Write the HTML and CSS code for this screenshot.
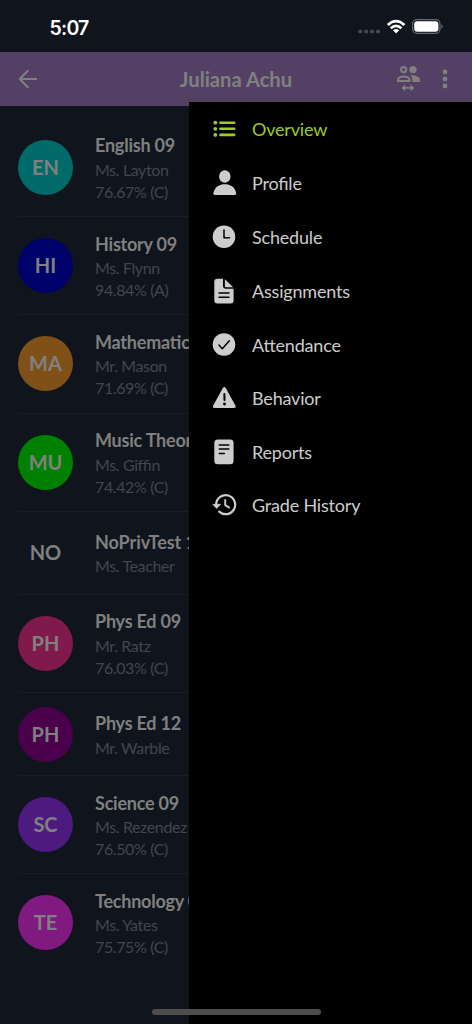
FILE: index.html
```html
<!DOCTYPE html>
<html lang="en">
<head>
<meta charset="utf-8">
<title>Juliana Achu</title>
<link rel="stylesheet" href="styles.css">
</head>
<body>
<div class="phone">
  <div class="status">
    <span class="time">5:07</span>
    <svg class="status-icons" width="86" height="20" viewBox="0 0 86 20">
      <g fill="#45484f"><circle cx="3.3" cy="14.500" r="2.1"/><circle cx="9.2" cy="14.500" r="2.1"/><circle cx="15.1" cy="14.500" r="2.1"/><circle cx="21" cy="14.500" r="2.1"/></g>
      <g fill="none" stroke="#fff" stroke-width="2.7"><path d="M30.8 8Q39 .2 47.4 8"/><path d="M33.8 11.2Q39.1 6.4 44.4 11.2"/></g>
      <path fill="#fff" d="M36 13.200Q39.1 10.600 42.2 13.200L39.1 16.400Z"/>
      <rect x="55.6" y="2.6" width="27.4" height="13.8" rx="4.3" fill="none" stroke="#64676c" stroke-width="1.2"/>
      <rect x="57.2" y="4.200" width="24.2" height="10.6" rx="3" fill="#fff"/>
      <path d="M84.3 7.300q3 2.2 0 4.6z" fill="#64676c"/>
    </svg>
  </div>
  <header class="bar">
    <svg class="back" width="20" height="20" viewBox="0 0 20 20" fill="none" stroke="#808080" stroke-width="2" stroke-linecap="round" stroke-linejoin="round"><path d="M18.2 10H2M9.8 1.8L1.7 10l8.1 8.2"/></svg>
    <h1 class="name">Juliana Achu</h1>
    <svg class="people" width="24" height="27" viewBox="0 0 24 27" fill="#808080">
      <circle cx="7.7" cy="4.6" r="2.6" fill="none" stroke="#808080" stroke-width="2"/>
      <circle cx="17" cy="4.6" r="3.6"/>
      <path d="M2 16.1v-1.2C2 12.8 5.1 11.4 7.8 11.4s5.8 1.4 5.8 3.5v1.2z" fill="none" stroke="#808080" stroke-width="2"/>
      <path d="M15.4 10.2c4.7 0 8.6 1.7 8.6 4.8v2.1h-7.6v-2.3c0-1.9-.9-3.5-2.4-4.5z"/>
      <path d="M5.3 22.9l4-3.4v2.5h5.2v-2.5l4 3.4-4 3.4v-2.5H9.3v2.5z"/>
    </svg>
    <svg class="dots" width="6" height="20" viewBox="0 0 6 20" fill="#808080"><circle cx="3" cy="3" r="2.4"/><circle cx="3" cy="10" r="2.4"/><circle cx="3" cy="17" r="2.4"/></svg>
  </header>
  <ul class="courses">
    <li class="course"><span class="avatar teal">EN</span><div class="info"><b>English 09</b><p>Ms. Layton</p><p>76.67% (C)</p></div></li>
    <li class="course"><span class="avatar navy">HI</span><div class="info"><b>History 09</b><p>Ms. Flynn</p><p>94.84% (A)</p></div></li>
    <li class="course"><span class="avatar orange">MA</span><div class="info"><b>Mathematics 09</b><p>Mr. Mason</p><p>71.69% (C)</p></div></li>
    <li class="course"><span class="avatar green">MU</span><div class="info"><b>Music Theory 09</b><p>Ms. Giffin</p><p>74.42% (C)</p></div></li>
    <li class="course short"><span class="avatar">NO</span><div class="info"><b class="roomy">NoPrivTest 12</b><p>Ms. Teacher</p></div></li>
    <li class="course"><span class="avatar pink">PH</span><div class="info"><b>Phys Ed 09</b><p>Mr. Ratz</p><p>76.03% (C)</p></div></li>
    <li class="course short"><span class="avatar plum">PH</span><div class="info"><b>Phys Ed 12</b><p>Mr. Warble</p></div></li>
    <li class="course"><span class="avatar violet">SC</span><div class="info"><b>Science 09</b><p>Ms. Rezendez</p><p>76.50% (C)</p></div></li>
    <li class="course"><span class="avatar magenta">TE</span><div class="info"><b>Technology 09</b><p>Ms. Yates</p><p>75.75% (C)</p></div></li>
  </ul>
  <nav class="drawer">
    <a class="item active"><svg class="icon" viewBox="0 0 26 26"><g fill="currentColor"><circle cx="3.3" cy="6.7" r="1.9"/><circle cx="3.3" cy="12.8" r="1.9"/><circle cx="3.3" cy="18.9" r="1.9"/><rect x="7.3" y="5.4" width="16" height="2.6" rx=".8"/><rect x="7.3" y="11.5" width="16" height="2.6" rx=".8"/><rect x="7.3" y="17.6" width="16" height="2.6" rx=".8"/></g></svg>Overview</a>
    <a class="item"><svg class="icon" viewBox="0 0 26 26"><g fill="currentColor"><ellipse cx="12.8" cy="6.5" rx="5.7" ry="6.2"/><path d="M3 25Q1.2 25 1.4 23.2C2.5 16.8 7.5 14.2 12.8 14.2S23.1 16.8 24.2 23.2Q24.4 25 22.6 25Z"/></g></svg>Profile</a>
    <a class="item"><svg class="icon" viewBox="0 0 26 26"><circle cx="12" cy="12.8" r="11.3" fill="currentColor"/><path d="M12 6v7.700h5.500" fill="none" stroke="#000" stroke-width="1.500" stroke-linecap="round" stroke-linejoin="round"/></svg>Schedule</a>
    <a class="item"><svg class="icon" viewBox="0 0 26 26"><path fill="currentColor" d="M5.500.8h5.500v7.500q0 2.400 2.400 2.400h8.200v11.500q0 3.200-3.200 3.200H5.500q-3.200 0-3.200-3.200V4Q2.300.8 5.500.8ZM12.900 1.200l8.300 8h-7q-1.300 0-1.300-1.300Z"/><path d="M7 14.900h10M7 19.200h10" stroke="#000" stroke-width="1.500" stroke-linecap="round"/></svg>Assignments</a>
    <a class="item"><svg class="icon" viewBox="0 0 26 26"><circle cx="12" cy="12.500" r="11.300" fill="currentColor"/><path d="M6.900 13.100l3.400 3.600 7-8" fill="none" stroke="#000" stroke-width="1.500" stroke-linecap="round" stroke-linejoin="round"/></svg>Attendance</a>
    <a class="item"><svg class="icon" viewBox="0 0 26 26"><path fill="currentColor" d="M10.700 3.300q1.600-2.700 3.200 0l9.500 17.300q1.100 2.500-1.500 2.500H2.700q-2.600 0-1.500-2.500Z"/><path d="M12.400 8.900l.1 6.200" stroke="#000" stroke-width="2" stroke-linecap="round"/><circle cx="12.500" cy="19" r="1.400"/></svg>Behavior</a>
    <a class="item"><svg class="icon" viewBox="0 0 26 26"><rect x="2.300" y=".5" width="19.300" height="24.700" rx="3.500" fill="currentColor"/><path d="M7.300 6h9.500M7.300 10.100h9.500M7.300 14.500h5" stroke="#000" stroke-width="1.500" stroke-linecap="round"/></svg>Reports</a>
    <a class="item last"><svg class="icon" viewBox="0 0 26 26"><path d="M4.200 12.300a9.500 9.500 0 1 1 3 7.300" fill="none" stroke="currentColor" stroke-width="2.200" stroke-linecap="round"/><path d="M.7 12.300h8L4.600 16.500Z" fill="currentColor" stroke="currentColor" stroke-width=".6" stroke-linejoin="round"/><path d="M13.200 8v5.100l4 2.500" fill="none" stroke="currentColor" stroke-width="1.900" stroke-linecap="round" stroke-linejoin="round"/></svg>Grade History</a>
  </nav>
  <div class="home"></div>
</div>
</body>
</html>
```
FILE: styles.css
```css
* { box-sizing: border-box; }
body { margin: 0; background: #10151d; }
.phone {
  position: relative;
  width: 472px;
  height: 1024px;
  overflow: hidden;
  background: #10151d;
  font-family: Lato, sans-serif;
  font-feature-settings: "liga" 1;
  color: #808080;
}
.status {
  height: 52px;
  padding: 2px 29.500px 0 49.500px;
  display: flex;
  align-items: center;
  justify-content: space-between;
}
.time { padding-top: 1px; font: 600 19.500px/24px Inter, sans-serif; letter-spacing: -.8px; color: #fff; }
.bar {
  height: 53.500px;
  padding: 0 24px 0 18px;
  display: grid;
  grid-template-columns: 20px 1fr 24px 6px;
  align-items: center;
  background: #544064;
}
.name {
  margin: 0;
  padding-left: 16px;
  text-align: center;
  font-size: 20.200px;
  line-height: 26px;
  font-weight: 700;
}
.people { margin: -1px 0 0 -22px; }
.courses { margin: 0; padding: 13.200px 0 0 18px; list-style: none; }
.course {
  height: 98.300px;
  display: flex;
  align-items: center;
  gap: 22px;
  border-bottom: 1.500px solid #171d29;
}
.course:last-child { border-bottom-color: transparent; }
.short { height: 82.900px; }
.avatar {
  flex: none;
  width: 55px;
  height: 55px;
  border-radius: 50%;
  text-align: center;
  font-size: 20px;
  font-weight: 700;
  line-height: 54.500px;
}
.teal { background: #006b68; }
.navy { background: #00006b; }
.orange { background: #805019; }
.green { background: #008000; }
.pink { background: #801a4d; }
.plum { background: #4b004b; }
.violet { background: #4d1a80; }
.magenta { background: #801a80; }
.info { white-space: nowrap; padding-top: .5px; }
.info b { display: block; font-size: 18px; line-height: 26.500px; letter-spacing: -.22px; }
.info .roomy { letter-spacing: -.05px; }
.info p { margin: 0; font-size: 16px; line-height: 22px; letter-spacing: -.38px; color: #414650; }
.drawer {
  position: absolute;
  left: 189px;
  top: 102px;
  right: 0;
  bottom: 0;
  padding: .3px 0 0 23px;
  background: #000;
}
.item {
  height: 53.850px;
  display: flex;
  align-items: center;
  gap: 14px;
  font-size: 18px;
  letter-spacing: -.19px;
  color: #cdcdcd;
}
.last { height: 52.500px; }
.active { color: #9ccb2b; }
.icon { flex: none; width: 26px; height: 26px; }
.home {
  position: absolute;
  left: 152px;
  top: 1009px;
  width: 168.500px;
  height: 6px;
  border-radius: 3px;
  background: #4d4d4d;
}
```
